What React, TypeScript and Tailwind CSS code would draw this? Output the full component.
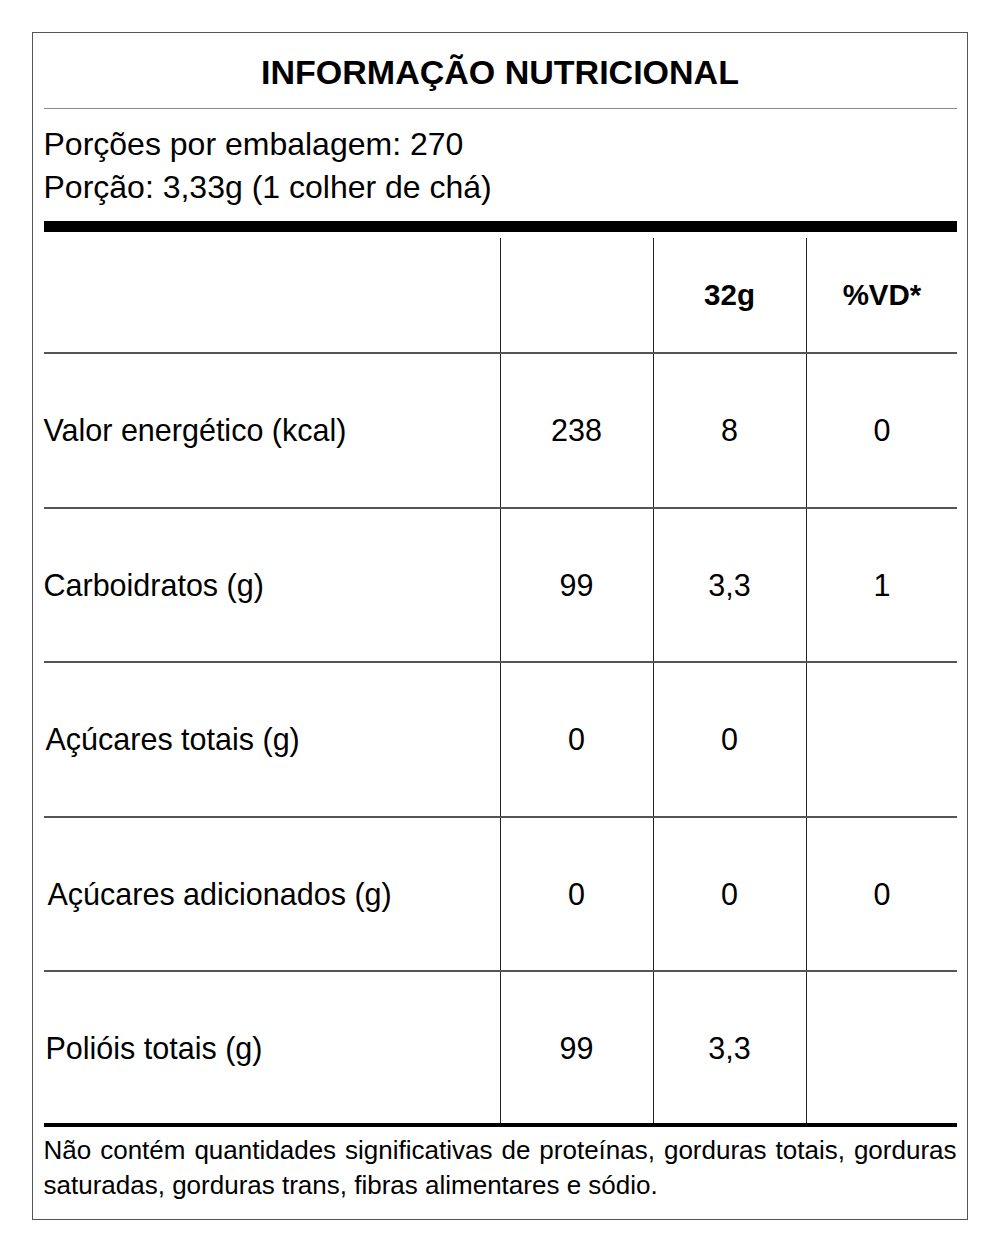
const rows = [
  { label: "Valor energético (kcal)", a: "238", b: "8", c: "0", pad: "pl-0" },
  { label: "Carboidratos (g)", a: "99", b: "3,3", c: "1", pad: "pl-0" },
  { label: "Açúcares totais (g)", a: "0", b: "0", c: "", pad: "pl-[2px]" },
  { label: "Açúcares adicionados (g)", a: "0", b: "0", c: "0", pad: "pl-[4px]" },
  { label: "Polióis totais (g)", a: "99", b: "3,3", c: "", pad: "pl-[2px]" },
];

const cell = "flex items-center justify-center border-l-[1.5px] border-[#222]";

export default function App() {
  return (
    <div
      className="min-h-[1251px] bg-white pt-[32px] pl-[32px] text-black"
      style={{ fontFamily: '"Liberation Sans", Arial, sans-serif' }}
    >
      <div className="w-[936px] border-[1.5px] border-[#555] px-[10.5px]">
        <div className="flex h-[75px] items-center justify-center pt-[4px] text-[34px] font-bold">
          INFORMAÇÃO NUTRICIONAL
        </div>
        <div className="h-px bg-[#8a8a8a]" />

        <div className="pt-[14px] pb-[12px] text-[32px] leading-[43px]">
          <div>Porções por embalagem: 270</div>
          <div>Porção: 3,33g (1 colher de chá)</div>
        </div>
        <div className="h-[11px] bg-black" />

        {/* table */}
        <div className="mt-[6px]">
          <div className="grid h-[116px] grid-cols-[456px_153px_153px_152px] border-b-2 border-[#555] text-[29.5px] font-bold">
            <div />
            <div className={cell} />
            <div className={cell}>32g</div>
            <div className={cell}>%VD*</div>
          </div>
          {rows.map((r, i) => (
            <div
              key={r.label}
              className={
                "grid grid-cols-[456px_153px_153px_152px] text-[30.5px] " +
                (i < rows.length - 1 ? "h-[154.5px] border-b-2 border-[#555]" : "h-[151px]")
              }
            >
              <div className={"flex items-center pt-[2px] " + r.pad}>{r.label}</div>
              <div className={cell + " pt-[2px]"}>{r.a}</div>
              <div className={cell + " pt-[2px]"}>{r.b}</div>
              <div className={cell + " pt-[2px]"}>{r.c}</div>
            </div>
          ))}
        </div>
        <div className="h-[4px] bg-black" />

        <p className="pt-[6px] pb-[16px] text-justify text-[26px] leading-[35px]">
          Não contém quantidades significativas de proteínas, gorduras totais, gorduras saturadas,
          gorduras trans, fibras alimentares e sódio.
        </p>
      </div>
    </div>
  );
}
